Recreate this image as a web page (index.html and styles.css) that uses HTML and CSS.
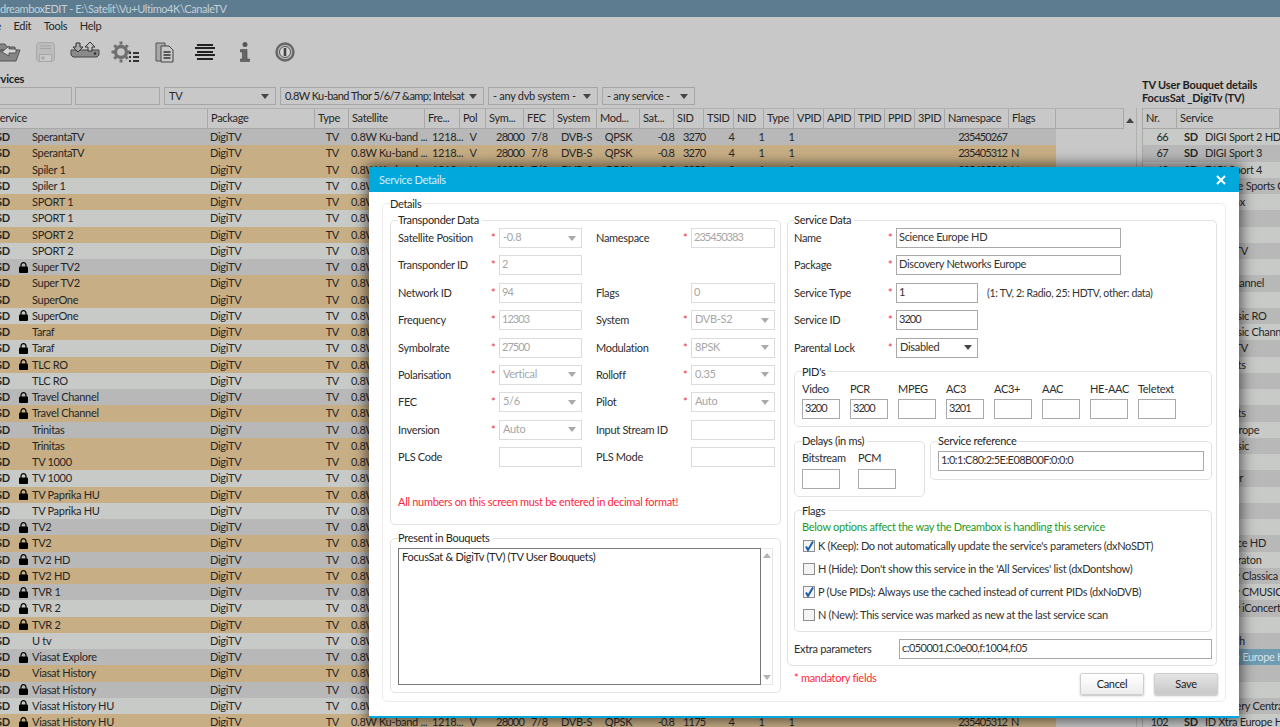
FILE: index.html
```html
<!DOCTYPE html>
<html lang="en">
<head>
<meta charset="utf-8">
<title>dreamboxEDIT</title>
<link rel="stylesheet" href="styles.css">
</head>
<body>
<svg class="defs" aria-hidden="true"><symbol id="lock" viewBox="0 0 9 11"><path d="M2 5V3.2C2 1.7 3 .7 4.5.7S7 1.7 7 3.2V5" fill="none" stroke="#000" stroke-width="1.2"/><rect x="0" y="4.4" width="9" height="6.6" rx="1" fill="#000"/></symbol><symbol id="check" viewBox="0 0 12 12"><path d="M3 6.5 5 10 10 1.5" fill="none" stroke="#1c5fa8" stroke-width="2"/></symbol></svg>

<header class="titlebar">dreamboxEDIT - E:\Satelit\Vu+Ultimo4K\CanaleTV</header>
<nav class="menubar"><span>File</span><span>Edit</span><span>Tools</span><span>Help</span></nav>
<div class="toolbar">
  <span class="tool"><svg width="34" height="26" viewBox="0 0 34 26"><path d="M9 5h8l2 3h8v3H12L9 20zM9 20l4-9h19l-4 11H9z" fill="#858585" stroke="#555"/><path d="M14 13l7-6v3h7v4h-7v3z" fill="#d8d8d8" stroke="#555"/></svg></span>
  <span class="tool"><svg width="19" height="20" viewBox="0 0 19 20"><rect x=".5" y=".5" width="18" height="19" rx="3" fill="#bcbcbc" stroke="#a8a8a8"/><path d="M4 4h11M4 6.500h11" stroke="#a4a4a4"/><rect x="3.500" y="12.500" width="12" height="7" fill="#c8c8c8" stroke="#a8a8a8"/><rect x="5.500" y="14.500" width="3" height="3" fill="#a8a8a8"/></svg></span>
  <span class="tool"><svg class="tool-up" width="30" height="16" viewBox="0 0 30 16"><path d="M1 8h28v5l-2 2H3l-2-2z" fill="#8a8a8a" stroke="#444"/><circle cx="25" cy="11.500" r="1.300" fill="#333"/><path d="M6 1h4v4h3l-5 5-5-5h3z" fill="#a8a8a8" stroke="#333"/><path d="M18 9V5h-3l5-5 5 5h-3v4z" fill="#c4c4c4" stroke="#333"/></svg></span>
  <span class="tool"><svg width="28" height="22" viewBox="0 0 28 22"><g fill="none" stroke="#707070"><circle cx="10" cy="11" r="5.500" stroke-width="3.400"/><path d="M10 .5v3M10 18.500v3M.5 11h3M16.500 11h3M3.300 4.300l2 2M14.700 15.700l2 2M3.300 17.700l2-2M14.700 6.300l2-2" stroke-width="3"/></g><path d="M22 12h6M22 16h6M22 20h6M18 12h2M18 16h2M18 20h2" stroke="#333" stroke-width="2"/></svg></span>
  <span class="tool"><svg width="20" height="21" viewBox="0 0 20 21"><path d="M1 1h9v18H1z" fill="#a8a8a8" stroke="#555"/><path d="M6 4h8l4 4v12H6z" fill="#c8c8c8" stroke="#444"/><path d="M8.500 10h7M8.500 13h7M8.500 16h7" stroke="#333" stroke-width="1.500"/></svg></span>
  <span class="tool"><svg width="22" height="16" viewBox="0 0 22 16"><path d="M3 1h16M1 4h20M3 8h16M1 11h20M3 15h16" stroke="#222" stroke-width="2"/></svg></span>
  <span class="tool"><svg width="10" height="20" viewBox="0 0 10 20"><circle cx="5" cy="2.500" r="2.500" fill="#555"/><path d="M.5 7.500h6.500v9.500h2.500v2.500H.5V17h2v-7h-2z" fill="#666" stroke="#444" stroke-width=".6"/></svg></span>
  <span class="tool"><svg width="20" height="20" viewBox="0 0 20 20"><circle cx="10" cy="10" r="8.500" fill="#b8b8b8" stroke="#666" stroke-width="2.400"/><circle cx="10" cy="10" r="5.500" fill="#d6d6d6" stroke="#555"/><path d="M10 6v8" stroke="#444" stroke-width="2.600"/></svg></span>
</div>

<main class="workspace">
  <section class="services">
    <h2 class="pane-title">Services</h2>
    <div class="filters">
      <span class="filter f1"></span>
      <span class="filter f2"></span>
      <span class="filter f3">TV<i class="tri"></i></span>
      <span class="filter f4"><span class="clip">0.8W Ku-band Thor 5/6/7 &amp;amp; Intelsat</span><i class="tri"></i></span>
      <span class="filter f5">- any dvb system -<i class="tri"></i></span>
      <span class="filter f6">- any service -<i class="tri"></i></span>
    </div>
    <div class="table">
      <div class="grid-area">
        <div class="thead cols">
          <span>Service</span><span>Package</span><span>Type</span><span>Satellite</span><span>Fre...</span><span>Pol</span><span>Sym...</span><span>FEC</span><span>System</span><span>Mod...</span><span>Sat...</span><span>SID</span><span>TSID</span><span>NID</span><span>Type</span><span>VPID</span><span>APID</span><span>TPID</span><span>PPID</span><span>3PID</span><span>Namespace</span><span>Flags</span><span></span>
        </div>
        <div class="row cols d"><b>SD</b><i></i><u>SperantaTV</u><em>DigiTV</em><s>TV</s><var>0.8W Ku-band ...</var><span>1218...</span><span class="ctr">V</span><span class="rt">28000</span><span>7/8</span><span>DVB-S</span><span class="ctr">QPSK</span><span class="rt">-0.8</span><span class="sid">3270</span><span class="rt">4</span><span class="rt">1</span><span class="rt">1</span><span class="ns">235450267</span></div>
        <div class="row cols t"><b>SD</b><i></i><u>SperantaTV</u><em>DigiTV</em><s>TV</s><var>0.8W Ku-band ...</var><span>1218...</span><span class="ctr">V</span><span class="rt">28000</span><span>7/8</span><span>DVB-S</span><span class="ctr">QPSK</span><span class="rt">-0.8</span><span class="sid">3270</span><span class="rt">4</span><span class="rt">1</span><span class="rt">1</span><span class="ns">235405312</span><span class="fl">N</span></div>
        <div class="row cols t"><b>SD</b><i></i><u>Spiler 1</u><em>DigiTV</em><s>TV</s><var>0.8W Ku-band ...</var><span>1212...</span><span class="ctr">H</span><span class="rt">28000</span><span>7/8</span><span>DVB-S</span><span class="ctr">QPSK</span><span class="rt">-0.8</span><span class="sid">3250</span><span class="rt">3</span><span class="rt">1</span><span class="rt">1</span><span class="ns">235405312</span><span class="fl">N</span></div>
        <div class="row cols l"><b>SD</b><i></i><u>Spiler 1</u><em>DigiTV</em><s>TV</s><var>0.8W Ku-band ...</var></div>
        <div class="row cols t"><b>SD</b><i></i><u>SPORT 1</u><em>DigiTV</em><s>TV</s><var>0.8W Ku-band ...</var></div>
        <div class="row cols l"><b>SD</b><i></i><u>SPORT 1</u><em>DigiTV</em><s>TV</s><var>0.8W Ku-band ...</var></div>
        <div class="row cols t"><b>SD</b><i></i><u>SPORT 2</u><em>DigiTV</em><s>TV</s><var>0.8W Ku-band ...</var></div>
        <div class="row cols l"><b>SD</b><i></i><u>SPORT 2</u><em>DigiTV</em><s>TV</s><var>0.8W Ku-band ...</var></div>
        <div class="row cols d"><b>SD</b><i><svg class="lock"><use href="#lock"/></svg></i><u>Super TV2</u><em>DigiTV</em><s>TV</s><var>0.8W Ku-band ...</var></div>
        <div class="row cols t"><b>SD</b><i></i><u>Super TV2</u><em>DigiTV</em><s>TV</s><var>0.8W Ku-band ...</var></div>
        <div class="row cols t"><b>SD</b><i></i><u>SuperOne</u><em>DigiTV</em><s>TV</s><var>0.8W Ku-band ...</var></div>
        <div class="row cols l"><b>SD</b><i><svg class="lock"><use href="#lock"/></svg></i><u>SuperOne</u><em>DigiTV</em><s>TV</s><var>0.8W Ku-band ...</var></div>
        <div class="row cols t"><b>SD</b><i></i><u>Taraf</u><em>DigiTV</em><s>TV</s><var>0.8W Ku-band ...</var></div>
        <div class="row cols l"><b>SD</b><i><svg class="lock"><use href="#lock"/></svg></i><u>Taraf</u><em>DigiTV</em><s>TV</s><var>0.8W Ku-band ...</var></div>
        <div class="row cols t"><b>SD</b><i><svg class="lock"><use href="#lock"/></svg></i><u>TLC RO</u><em>DigiTV</em><s>TV</s><var>0.8W Ku-band ...</var></div>
        <div class="row cols l"><b>SD</b><i></i><u>TLC RO</u><em>DigiTV</em><s>TV</s><var>0.8W Ku-band ...</var></div>
        <div class="row cols d"><b>SD</b><i><svg class="lock"><use href="#lock"/></svg></i><u>Travel Channel</u><em>DigiTV</em><s>TV</s><var>0.8W Ku-band ...</var></div>
        <div class="row cols t"><b>SD</b><i><svg class="lock"><use href="#lock"/></svg></i><u>Travel Channel</u><em>DigiTV</em><s>TV</s><var>0.8W Ku-band ...</var></div>
        <div class="row cols d"><b>SD</b><i></i><u>Trinitas</u><em>DigiTV</em><s>TV</s><var>0.8W Ku-band ...</var></div>
        <div class="row cols t"><b>SD</b><i></i><u>Trinitas</u><em>DigiTV</em><s>TV</s><var>0.8W Ku-band ...</var></div>
        <div class="row cols t"><b>SD</b><i></i><u>TV 1000</u><em>DigiTV</em><s>TV</s><var>0.8W Ku-band ...</var></div>
        <div class="row cols l"><b>SD</b><i><svg class="lock"><use href="#lock"/></svg></i><u>TV 1000</u><em>DigiTV</em><s>TV</s><var>0.8W Ku-band ...</var></div>
        <div class="row cols t"><b>SD</b><i><svg class="lock"><use href="#lock"/></svg></i><u>TV Paprika HU</u><em>DigiTV</em><s>TV</s><var>0.8W Ku-band ...</var></div>
        <div class="row cols l"><b>SD</b><i></i><u>TV Paprika HU</u><em>DigiTV</em><s>TV</s><var>0.8W Ku-band ...</var></div>
        <div class="row cols d"><b>SD</b><i><svg class="lock"><use href="#lock"/></svg></i><u>TV2</u><em>DigiTV</em><s>TV</s><var>0.8W Ku-band ...</var></div>
        <div class="row cols t"><b>SD</b><i><svg class="lock"><use href="#lock"/></svg></i><u>TV2</u><em>DigiTV</em><s>TV</s><var>0.8W Ku-band ...</var></div>
        <div class="row cols d"><b>SD</b><i><svg class="lock"><use href="#lock"/></svg></i><u>TV2 HD</u><em>DigiTV</em><s>TV</s><var>0.8W Ku-band ...</var></div>
        <div class="row cols t"><b>SD</b><i><svg class="lock"><use href="#lock"/></svg></i><u>TV2 HD</u><em>DigiTV</em><s>TV</s><var>0.8W Ku-band ...</var></div>
        <div class="row cols d"><b>SD</b><i><svg class="lock"><use href="#lock"/></svg></i><u>TVR 1</u><em>DigiTV</em><s>TV</s><var>0.8W Ku-band ...</var></div>
        <div class="row cols l"><b>SD</b><i><svg class="lock"><use href="#lock"/></svg></i><u>TVR 2</u><em>DigiTV</em><s>TV</s><var>0.8W Ku-band ...</var></div>
        <div class="row cols t"><b>SD</b><i><svg class="lock"><use href="#lock"/></svg></i><u>TVR 2</u><em>DigiTV</em><s>TV</s><var>0.8W Ku-band ...</var></div>
        <div class="row cols l"><b>SD</b><i></i><u>U tv</u><em>DigiTV</em><s>TV</s><var>0.8W Ku-band ...</var></div>
        <div class="row cols d"><b>SD</b><i><svg class="lock"><use href="#lock"/></svg></i><u>Viasat Explore</u><em>DigiTV</em><s>TV</s><var>0.8W Ku-band ...</var></div>
        <div class="row cols t"><b>SD</b><i></i><u>Viasat History</u><em>DigiTV</em><s>TV</s><var>0.8W Ku-band ...</var></div>
        <div class="row cols d"><b>SD</b><i><svg class="lock"><use href="#lock"/></svg></i><u>Viasat History</u><em>DigiTV</em><s>TV</s><var>0.8W Ku-band ...</var></div>
        <div class="row cols l"><b>SD</b><i><svg class="lock"><use href="#lock"/></svg></i><u>Viasat History HU</u><em>DigiTV</em><s>TV</s><var>0.8W Ku-band ...</var><span>1218...</span><span class="ctr">V</span><span class="rt">28000</span><span>7/8</span><span>DVB-S</span><span class="ctr">QPSK</span><span class="rt">-0.8</span><span class="sid">1175</span><span class="rt">4</span><span class="rt">1</span><span class="rt">1</span><span class="ns">235450267</span></div>
        <div class="row cols t"><b>SD</b><i><svg class="lock"><use href="#lock"/></svg></i><u>Viasat History HU</u><em>DigiTV</em><s>TV</s><var>0.8W Ku-band ...</var><span>1218...</span><span class="ctr">V</span><span class="rt">28000</span><span>7/8</span><span>DVB-S</span><span class="ctr">QPSK</span><span class="rt">-0.8</span><span class="sid">1175</span><span class="rt">4</span><span class="rt">1</span><span class="rt">1</span><span class="ns">235405312</span><span class="fl">N</span></div>
      </div>
      <div class="vscroll"><i class="up"></i></div>
    </div>
  </section>

  <aside class="bouquet">
    <h2 class="pane-title two">TV User Bouquet details<br>FocusSat _DigiTv (TV)</h2>
    <div class="bq-table">
      <div class="bq-head bq-cols"><span>Nr.</span><span>Service</span></div>
      <div class="bq-row bq-cols"><span class="nr">66</span><b>SD</b><span>DIGI Sport 2 HD Dolby</span></div>
      <div class="bq-row bq-cols alt"><span class="nr">67</span><b>SD</b><span>DIGI Sport 3</span></div>
      <div class="bq-row bq-cols"><span class="nr">68</span><b>SD</b><span>DIGI Sport 4</span></div>
      <div class="bq-row bq-cols alt"><span class="nr">69</span><b>SD</b><span>Extreme Sports Channel</span></div>
      <div class="bq-row bq-cols"><span class="nr">70</span><b>SD</b><span>Cinemax</span></div>
      <div class="bq-row bq-cols alt"><span class="nr">71</span><b>SD</b><span>Disney</span></div>
      <div class="bq-row bq-cols"><span class="nr">72</span><b>SD</b><span></span></div>
      <div class="bq-row bq-cols alt"><span class="nr">73</span><b>SD</b><span>Music TV</span></div>
      <div class="bq-row bq-cols"><span class="nr">74</span><b>SD</b><span></span></div>
      <div class="bq-row bq-cols alt"><span class="nr">75</span><b>SD</b><span>Arts Channel</span></div>
      <div class="bq-row bq-cols"><span class="nr">76</span><b>SD</b><span></span></div>
      <div class="bq-row bq-cols alt"><span class="nr">77</span><b>SD</b><span>Hit Music RO</span></div>
      <div class="bq-row bq-cols"><span class="nr">78</span><b>SD</b><span>Hit Music Channel</span></div>
      <div class="bq-row bq-cols alt"><span class="nr">79</span><b>SD</b><span>Music TV</span></div>
      <div class="bq-row bq-cols"><span class="nr">80</span><b>SD</b><span>Fine Arts</span></div>
      <div class="bq-row bq-cols alt"><span class="nr">81</span><b>SD</b><span>Trinitas</span></div>
      <div class="bq-row bq-cols"><span class="nr">82</span><b>SD</b><span>Trinitas</span></div>
      <div class="bq-row bq-cols alt"><span class="nr">83</span><b>SD</b><span>Fine Arts</span></div>
      <div class="bq-row bq-cols"><span class="nr">84</span><b>SD</b><span>Film Europe</span></div>
      <div class="bq-row bq-cols alt"><span class="nr">85</span><b>SD</b><span>Hit Music</span></div>
      <div class="bq-row bq-cols"><span class="nr">86</span><b>SD</b><span></span></div>
      <div class="bq-row bq-cols alt"><span class="nr">87</span><b>SD</b><span>Explorer</span></div>
      <div class="bq-row bq-cols"><span class="nr">88</span><b>SD</b><span></span></div>
      <div class="bq-row bq-cols alt"><span class="nr">89</span><b>SD</b><span></span></div>
      <div class="bq-row bq-cols"><span class="nr">90</span><b>SD</b><span></span></div>
      <div class="bq-row bq-cols alt"><span class="nr">91</span><b>SD</b><span>Romance HD</span></div>
      <div class="bq-row bq-cols"><span class="nr">92</span><b>SD</b><span>TV Sheraton</span></div>
      <div class="bq-row bq-cols alt"><span class="nr">93</span><b>SD</b><span>Melody Classica</span></div>
      <div class="bq-row bq-cols"><span class="nr">94</span><b>SD</b><span>Melody CMUSIC</span></div>
      <div class="bq-row bq-cols alt"><span class="nr">95</span><b>SD</b><span>Melody iConcerts</span></div>
      <div class="bq-row bq-cols"><span class="nr">96</span><b>SD</b><span></span></div>
      <div class="bq-row bq-cols alt"><span class="nr">97</span><b>SD</b><span>TV Earth</span></div>
      <div class="bq-row bq-cols sel"><span class="nr">98</span><b>HD</b><span>Science Europe HD</span></div>
      <div class="bq-row bq-cols alt"><span class="nr">99</span><b>SD</b><span></span></div>
      <div class="bq-row bq-cols"><span class="nr">100</span><b>SD</b><span></span></div>
      <div class="bq-row bq-cols alt"><span class="nr">101</span><b>SD</b><span>Discovery Central</span></div>
      <div class="bq-row bq-cols"><span class="nr">102</span><b>SD</b><span>ID Xtra Europe HD</span></div>
    </div>
  </aside>
</main>

<div class="modal">
  <div class="modal-title"><span>Service Details</span><svg width="10" height="10" viewBox="0 0 10 10"><path d="M1 1l8 8M9 1l-8 8" stroke="#fff" stroke-width="2"/></svg></div>
  <div class="modal-body">
    <fieldset class="group details">
      <legend>Details</legend>
      <div class="columns">
        <div class="col-left">
          <fieldset class="group transponder">
            <legend>Transponder Data</legend>
            <div class="form-grid">
              <label>Satellite Position</label><em class="star">*</em><span class="field off combo">-0.8<i class="tri"></i></span>
              <label class="r">Namespace</label><em class="star">*</em><span class="field off num">235450383</span>
              <label>Transponder ID</label><em class="star">*</em><span class="field off num">2</span>
              <span class="blank"></span>
              <label>Network ID</label><em class="star">*</em><span class="field off num">94</span>
              <label class="r">Flags</label><em class="star"></em><span class="field off num">0</span>
              <label>Frequency</label><em class="star">*</em><span class="field off num">12303</span>
              <label class="r">System</label><em class="star">*</em><span class="field off combo">DVB-S2<i class="tri"></i></span>
              <label>Symbolrate</label><em class="star">*</em><span class="field off num">27500</span>
              <label class="r">Modulation</label><em class="star">*</em><span class="field off combo">8PSK<i class="tri"></i></span>
              <label>Polarisation</label><em class="star">*</em><span class="field off combo">Vertical<i class="tri"></i></span>
              <label class="r">Rolloff</label><em class="star">*</em><span class="field off combo">0.35<i class="tri"></i></span>
              <label>FEC</label><em class="star">*</em><span class="field off combo">5/6<i class="tri"></i></span>
              <label class="r">Pilot</label><em class="star">*</em><span class="field off combo">Auto<i class="tri"></i></span>
              <label>Inversion</label><em class="star">*</em><span class="field off combo">Auto<i class="tri"></i></span>
              <label class="r">Input Stream ID</label><em class="star"></em><span class="field off"></span>
              <label>PLS Code</label><em class="star"></em><span class="field off"></span>
              <label class="r">PLS Mode</label><em class="star"></em><span class="field off"></span>
            </div>
            <p class="warn">All numbers on this screen must be entered in decimal format!</p>
          </fieldset>
          <fieldset class="group present">
            <legend>Present in Bouquets</legend>
            <div class="listwrap">
              <div class="listbox">FocusSat &amp; DigiTv (TV) (TV User Bouquets)</div>
              <div class="list-scroll"><i class="up"></i><i class="down"></i></div>
            </div>
          </fieldset>
        </div>
        <div class="col-right">
          <fieldset class="group service">
            <legend>Service Data</legend>
            <div class="svc-grid">
              <label>Name</label><em class="star">*</em><span class="field wide">Science Europe HD</span>
              <label>Package</label><em class="star">*</em><span class="field wide">Discovery Networks Europe</span>
              <label>Service Type</label><em class="star">*</em><span class="with-hint"><span class="field short num">1</span><small>(1: TV, 2: Radio, 25: HDTV, other: data)</small></span>
              <label>Service ID</label><em class="star">*</em><span class="field short num">3200</span>
              <label>Parental Lock</label><em class="star">*</em><span class="field short combo dark">Disabled<i class="tri"></i></span>
            </div>
            <fieldset class="group pids">
              <legend>PID's</legend>
              <div class="pid-grid">
                <label>Video</label><label>PCR</label><label>MPEG</label><label>AC3</label><label>AC3+</label><label>AAC</label><label>HE-AAC</label><label>Teletext</label>
                <span class="field num">3200</span><span class="field num">3200</span><span class="field"></span><span class="field num">3201</span><span class="field"></span><span class="field"></span><span class="field"></span><span class="field"></span>
              </div>
            </fieldset>
            <div class="pair">
              <fieldset class="group delays">
                <legend>Delays (in ms)</legend>
                <div class="delay-grid">
                  <label>Bitstream</label><label>PCM</label>
                  <span class="field"></span><span class="field"></span>
                </div>
              </fieldset>
              <fieldset class="group reference">
                <legend>Service reference</legend>
                <span class="field mixed">1:0:1:C80:2:5E:E08B00F:0:0:0</span>
              </fieldset>
            </div>
            <fieldset class="group flags">
              <legend>Flags</legend>
              <p class="green">Below options affect the way the Dreambox is handling this service</p>
              <div class="check"><span class="box"><svg><use href="#check"/></svg></span>K (Keep): Do not automatically update the service's parameters (dxNoSDT)</div>
              <div class="check"><span class="box"></span>H (Hide): Don't show this service in the 'All Services' list (dxDontshow)</div>
              <div class="check"><span class="box"><svg><use href="#check"/></svg></span>P (Use PIDs): Always use the cached instead of current PIDs (dxNoDVB)</div>
              <div class="check"><span class="box"></span>N (New): This service was marked as new at the last service scan</div>
            </fieldset>
            <div class="extra"><label>Extra parameters</label><span class="field mixed">c:050001,C:0e00,f:1004,f:05</span></div>
          </fieldset>
          <div class="footer">
            <span class="mandatory">* mandatory fields</span>
            <button class="btn" type="button">Cancel</button>
            <button class="btn primary" type="button">Save</button>
          </div>
        </div>
      </div>
    </fieldset>
  </div>
</div>
</body>
</html>
```

FILE: styles.css
```css
* { box-sizing: border-box; }
html, body { margin: 0; height: 100%; }
body {
  width: 1280px; height: 727px; overflow: hidden; position: relative;
  background: #c8c8c8; color: #262626;
  font: 11px/16px Lato, "Noto Sans", sans-serif;
  letter-spacing: -.3px;
}
.defs { width: 0; height: 0; display: block; }
i, em, u, s, var { font-style: normal; text-decoration: none; }

.titlebar { height: 17px; line-height: 17px; background: #5d7c8f; color: #c3d0d9; white-space: nowrap; letter-spacing: -.42px; }
.menubar { height: 17px; display: flex; gap: 12.5px; margin-left: -15px; align-items: center; }
.toolbar { height: 36px; display: flex; margin-left: -15px; align-items: center; }
.tool { width: 40px; display: flex; justify-content: center; align-items: center; flex: none; }
.tool-up { margin-bottom: 4px; }

.workspace { display: flex; margin-left: -8px; gap: 5px; height: 657px; }
.services { width: 1145px; flex: none; }
.pane-title { margin: 0; font-size: 11px; font-weight: 700; line-height: 16px; height: 17px; padding-top: 1px; color: #1e1e1e; white-space: nowrap; letter-spacing: -.15px; }
.pane-title.two { height: 38px; line-height: 13px; padding-top: 8px; }
.services > .pane-title { text-indent: -7px; }

.filters { display: flex; height: 18px; gap: 4px; margin-left: -12px; }
.filter { height: 18px; border: 1px solid #a6a6a6; display: flex; align-items: center; padding: 0 4px; white-space: nowrap; overflow: hidden; flex: none; }
.f1 { width: 92px; } .f2 { width: 85px; margin-left: -1px; } .f3 { width: 112px; } .f4 { width: 204px; } .f5 { width: 110px; } .f6 { width: 93px; }
.clip { overflow: hidden; flex: 1; letter-spacing: -.55px; }
.tri { flex: none; margin-left: auto; width: 0; height: 0; border: 4px solid transparent; border-top: 5px solid #444; border-bottom: 0; }
.filter .tri { margin-right: 2px; }

.table { display: flex; margin-top: 3px; height: 622px; }
.grid-area { width: 1132px; flex: none; overflow: hidden; }
.cols {
  display: grid;
  grid-template-columns: 27px 13px 176px 107px 34px 76px 35px 26px 38px 30px 43px 43px 34px 30px 30px 30px 30px 30px 31px 30px 30px 30px 64px 47px 68px;
}
.thead { height: 21px; border-top: 1px solid #b0b0b0; grid-template-columns: 216px 107px 34px 76px 35px 26px 38px 30px 43px 43px 34px 30px 30px 30px 30px 30px 31px 30px 30px 30px 64px 47px 68px; }
.thead span { border-right: 1px solid #a8a8a8; border-bottom: 1px solid #a8a8a8; padding: 1px 0 0 3px; white-space: nowrap; overflow: hidden; line-height: 16px; }
.thead span:first-child { padding-left: 2px; }
.row { height: 16.25px; line-height: 16px; width: 1064px; white-space: nowrap; }
.row b { padding-left: 4px; font-weight: 700; }
.row i { display: flex; align-items: center; }
.row em { padding-left: 2px; }
.row s { text-align: right; padding-right: 10px; }
.row var { padding-left: 2px; }
.row span { padding-left: 7px; }
.row .ctr { text-align: center; padding-left: 0; }
.row .rt { text-align: right; padding: 0; letter-spacing: -.8px; }
.row .sid { padding-left: 9px; letter-spacing: -.8px; }
.row .ns { grid-column-start: 23; text-align: right; padding: 0 2px 0 0; letter-spacing: -.95px; }
.row .fl { padding-left: 2px; }
.lock { width: 9px; height: 11px; display: block; }
.d { background: #b8b8b8; } .t { background: #c8ae85; } .l { background: #c8cac8; }
.vscroll { width: 13px; display: flex; justify-content: center; padding-top: 10px; border-right: 1px solid #b0b0b0; }
.up { width: 0; height: 0; border: 4px solid transparent; border-bottom: 5px solid #444; border-top: 0; display: block; }
.down { width: 0; height: 0; border: 4px solid transparent; border-top: 5px solid #777; border-bottom: 0; display: block; }

.bouquet { flex: 1; min-width: 0; overflow: hidden; }
.bq-table { border-left: 1px solid #a8a8a8; }
.bq-cols { display: grid; grid-template-columns: 34px 28px 1fr; white-space: nowrap; }
.bq-head { height: 21px; grid-template-columns: 34px 1fr; border-top: 1px solid #b0b0b0; }
.bq-head span { padding: 1px 0 0 3px; border-right: 1px solid #a8a8a8; border-bottom: 1px solid #a8a8a8; }
.bq-row { height: 16.25px; background: #c8cac8; }
.bq-row.alt { background: #b8b8b8; }
.bq-row.sel { background: #6f9cb2; color: #d8e4ea; }
.bq-row .nr { text-align: right; padding-right: 9px; letter-spacing: -.6px; }
.bq-row b { text-align: center; }

/* dialog */
.modal {
  position: absolute; left: 369px; top: 167px; width: 870px; height: 551px;
  background: #fff; border-bottom: 2px solid #00a8dc;
  box-shadow: 0 0 12px 3px rgba(0, 0, 0, .55);
}
.modal-title { height: 25px; background: #00a8dc; color: #d6eef8; display: flex; align-items: center; justify-content: space-between; padding: 0 13px 0 10px; }
.modal-body { padding: 3px 13px 0; }
.group { margin: 0; min-width: 0; border: 1px solid #e2e2e2; border-radius: 5px; padding: 0 7px; }
.group > legend { padding: 0 3px 0 0; height: 16px; line-height: 15px; }
.details { padding: 1px 8px 8px 7px; height: 507px; border-color: #ececec; }
.details > legend { line-height: 17px; }
.columns { display: grid; grid-template-columns: 391px 430px; gap: 6px; }
.col-left { display: flex; flex-direction: column; gap: 5px; }
.transponder { height: 313px; }
.present { height: 163px; }

label { white-space: nowrap; color: #2e2e2e; }
.star { color: #f0303c; }
.field {
  height: 20px; border: 1px solid #a9a9a9; padding: 0 2px 2px; line-height: 16px; display: flex;
  align-items: center; white-space: nowrap; overflow: hidden; background: #fff; color: #333;
}
.field.num { letter-spacing: -.95px; }
.field.mixed { letter-spacing: -.55px; }
.field.combo { padding-left: 3px; }
.field.off { border-color: #dcdcdc; color: #a6a6a6; }
.combo .tri { border-top-color: #aaa; margin-right: 3px; margin-top: 2px; }
.combo.dark .tri { border-top-color: #444; }

.form-grid { display: grid; grid-template-columns: 93px 8px 83px 101px 8px 84px; grid-auto-rows: 20px; row-gap: 7.4px; align-items: center; }
.form-grid .r { padding-left: 14px; }
.form-grid .blank { grid-column: span 3; }
.warn { color: #ff1f3c; margin: 27px 0 0; line-height: 16px; }

.listwrap { display: flex; padding-top: 2px; }
.listbox { width: 364px; height: 137px; border: 1px solid #777; padding: 0 3px; }
.list-scroll { width: 12px; height: 137px; border: 1px solid #e6e6e6; border-left: 0; display: flex; flex-direction: column; justify-content: space-between; align-items: center; padding: 4px 0; }
.list-scroll .up { border-bottom-color: #b4b4b4; }
.list-scroll .down { border-top-color: #b4b4b4; }

.service { padding: 0 4px 6px 6px; }
.svc-grid { display: grid; grid-template-columns: 94px 8px 1fr; grid-auto-rows: 20px; row-gap: 7.4px; align-items: center; }
.field.wide { width: 225px; }
.field.short { width: 82px; }
.with-hint { display: flex; align-items: center; gap: 9px; }
.with-hint small { font-size: 10.5px; color: #333; white-space: nowrap; }

.pids { margin-top: 6px; padding-bottom: 7px; }
.pid-grid { display: grid; grid-template-columns: repeat(8, 38px); column-gap: 10px; row-gap: 2.5px; padding-top: 1px; }
.pair { display: flex; gap: 5px; align-items: flex-start; margin-top: 6px; }
.delays { width: 131px; flex: none; padding-bottom: 7px; }
.delay-grid { display: grid; grid-template-columns: 38px 38px; column-gap: 18px; row-gap: 2.5px; padding-top: 1px; }
.reference { flex: 1; padding-bottom: 8px; }
.reference .field { margin-top: 2px; }
.flags { margin-top: 6px; padding-bottom: 4px; }
.green { margin: 0; color: #1e9a28; line-height: 16px; }
.check { height: 23px; display: flex; align-items: center; gap: 3px; white-space: nowrap; color: #333; }
.box { width: 12px; height: 12px; border: 1px solid #8e8e8e; background: #f4f4f4; margin-left: 1px; flex: none; display: block; }
.box svg { width: 12px; height: 12px; display: block; margin: -1px; }
.extra { display: flex; align-items: center; justify-content: space-between; margin-top: 7px; }
.extra .field { width: 313px; }
.footer { display: flex; align-items: center; margin-top: 7px; height: 22px; gap: 10px; padding-left: 7px; }
.mandatory { color: #ff1f3c; margin-right: auto; align-self: flex-start; line-height: 10px; }
.btn { width: 64px; height: 22px; font: inherit; letter-spacing: inherit; color: #222; border: 1px solid #cfcfcf; border-radius: 2px; background: linear-gradient(#ffffff, #ececec); box-shadow: 0 1px 2px rgba(0,0,0,.25); padding: 0; }
.btn.primary { background: linear-gradient(#e4e4e4, #c8c8c8); margin-right: -1px; }
```
